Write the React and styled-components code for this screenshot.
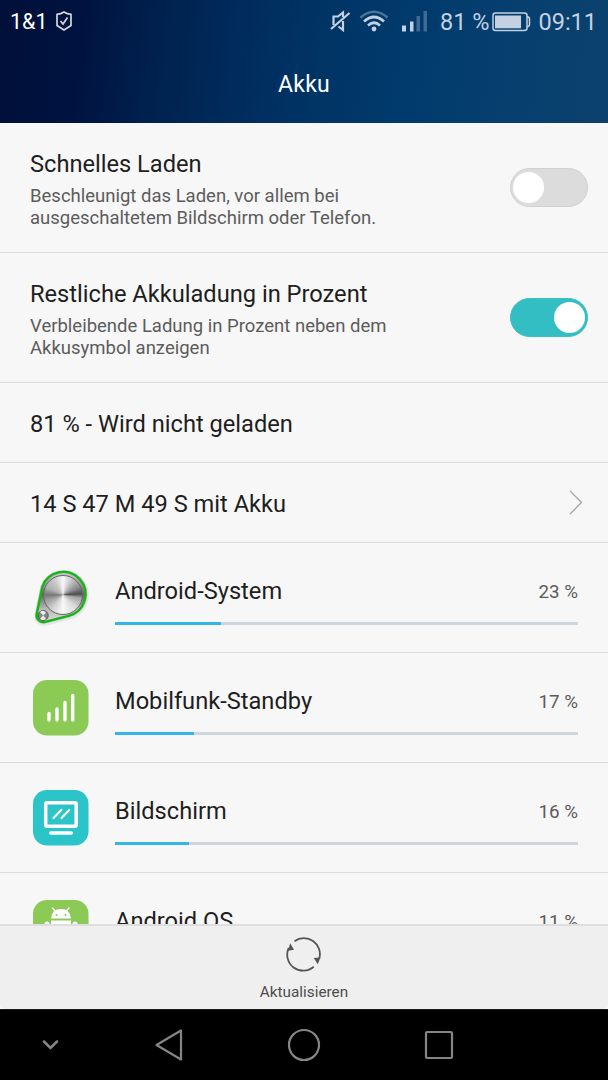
import styled, { createGlobalStyle } from "styled-components";

const GlobalStyle = createGlobalStyle`
	* {
		box-sizing: border-box;
		margin: 0;
		padding: 0;
	}

	body {
		background: #000;
		font-family: Roboto, sans-serif;
	}
`;

const Screen = styled.div`
	width: 608px;
	height: 1080px;
	display: flex;
	flex-direction: column;
	overflow: hidden;
	background: #f7f7f7;
`;

const Header = styled.header`
	flex: none;
	height: 123px;
	color: #fff;
	background: linear-gradient(97deg, #00103a 0%, #00123f 13%, #00224f 27%, #002c5d 40%, #003465 52%, #013b6d 68%, #07406f 85%, #0b416d 100%);
`;

const StatusBar = styled.div`
	height: 44px;
	padding: 0 11px 0 10px;
	display: flex;
	align-items: center;
	justify-content: space-between;
`;

const StatusGroup = styled.div`
	display: flex;
	align-items: center;
	color: #c3d1e0;
`;

const StatusText = styled.span`
	font-size: ${({ $size }) => $size || 23.5}px;
	line-height: 44px;
	margin-left: ${({ $left }) => $left || 0}px;
	color: ${({ $color }) => $color || "inherit"};
	white-space: nowrap;
`;

const Icon = styled.svg`
	display: block;
	flex: none;
	margin-left: ${({ $left }) => $left || 0}px;
`;

const Title = styled.h1`
	font-size: 23px;
	font-weight: 400;
	line-height: 81px;
	letter-spacing: 0.3px;
	text-align: center;
`;

const List = styled.main`
	height: 801px;
	flex: none;
	overflow: hidden;
`;

const Row = styled.div`
	height: ${({ $height }) => $height}px;
	padding: 0 20px 0 30px;
	display: flex;
	align-items: center;
	justify-content: space-between;
	border-bottom: 1px solid #dcdcdc;
`;

const RowText = styled.div`
	padding-top: ${({ $top }) => $top || 2}px;
`;

const RowTitle = styled.h2`
	font-size: 23.65px;
	font-weight: 400;
	line-height: 30px;
	color: #1e1e1e;
	white-space: nowrap;
`;

const Description = styled.p`
	margin-top: 6px;
	font-size: 18.5px;
	line-height: 22px;
	color: #5c5c5c;
	white-space: nowrap;
`;

const Toggle = styled.button`
	width: 78px;
	height: 39px;
	padding: 0 2px;
	display: flex;
	align-items: center;
	justify-content: ${({ $on }) => ($on ? "flex-end" : "flex-start")};
	border: 1px solid ${({ $on }) => ($on ? "#3ac0c5" : "#d0d0d0")};
	border-radius: 20px;
	background: ${({ $on }) => ($on ? "#33bec4" : "#dcdcdc")};
`;

const Knob = styled.span`
	width: 31px;
	height: 31px;
	border-radius: 50%;
	background: #fff;
`;

const AppRow = styled.div`
	height: 110px;
	padding: 0 30px;
	display: flex;
	border-bottom: 1px solid #dcdcdc;
`;

const AppIcon = styled.svg`
	flex: none;
	width: 60px;
	height: 60px;
	margin: 24px 25px 0 0;
`;

// Brushed metal face of the system icon
const MetalDisc = styled.div`
	width: 40px;
	height: 40px;
	border: 1px solid #666;
	border-radius: 50%;
	background: conic-gradient(#f8f8f8, #bdbdbd 35deg, #8a8a8a 65deg, #4c4c4c 86deg, #a5a5a5 100deg, #dadada 135deg, #f8f8f8 180deg, #cfcfcf 220deg, #999 255deg, #777 270deg, #b0b0b0 295deg, #cacaca 330deg, #f8f8f8);
`;

const AppBody = styled.div`
	flex: 1;
	padding-top: 33px;
`;

const AppLine = styled.div`
	height: 46px;
	display: flex;
	align-items: flex-start;
	justify-content: space-between;
`;

const Percent = styled.span`
	font-size: 18.8px;
	line-height: 32px;
	color: #5c5c5c;
`;

const Track = styled.div`
	height: 3px;
	background: #ccd6dc;
`;

const Fill = styled.div`
	height: 3px;
	background: #33b5e8;
`;

const Footer = styled.footer`
	flex: none;
	height: 85px;
	display: flex;
	flex-direction: column;
	align-items: center;
	padding-top: 10px;
	border-top: 2px solid #dedede;
	border-radius: 0 0 5px 5px;
	background: #efefef;
`;

const FooterLabel = styled.span`
	margin-top: 10px;
	font-size: 15.3px;
	line-height: 20px;
	color: #4c4c4c;
`;

const NavBar = styled.nav`
	flex: none;
	height: 71px;
	display: flex;
	align-items: center;
	border-top: 1px solid #1c1c1c;
	background: #000;
`;

const ShieldIcon = () => (
	<Icon $left={7} width="18" height="24" viewBox="0 0 18 24" fill="none" stroke="#d4d7d6" strokeWidth="1.7">
		<path d="M9 2 Q12 4 16 4.400 V15.500 Q13 17.500 9 20 Q5 17.500 2 15.500 V4.400 Q6 4 9 2 Z" />
		<path d="M5.500 11 L8 14 L12.500 7.500" />
	</Icon>
);

const MuteIcon = () => (
	<Icon width="22" height="24" viewBox="0 0 22 24" fill="none" stroke="#c3d1e0" strokeWidth="2.2">
		<path d="M4.500 15 V6.500 H9 L14 2.500 V7 M9.500 16.500 L14 20 V11 M2 19 L20.500 3" />
	</Icon>
);

const WifiIcon = () => (
	<Icon $left={8} width="30" height="24" viewBox="0 0 30 24" fill="none" strokeWidth="2.4">
		<path d="M1.500 7.500 Q15 -4 28.500 7.500" stroke="#4c749a" />
		<path d="M5 11.500 Q15 2.500 25 11.500 M9 15.500 Q15 10 21 15.500" stroke="#c3d1e0" strokeWidth="2.7" />
		<circle cx="15" cy="19" r="2.400" fill="#c3d1e0" />
	</Icon>
);

const SignalIcon = () => (
	<Icon $left={13} width="25" height="22" viewBox="0 0 25 22">
		<path d="M0 14.500h4v6H0z M8 10.500h3.500v10H8z" fill="#c3d1e0" />
		<path d="M14.500 5H18v15.500h-3.500z M21.500 0H25v20.500h-3.500z" fill="#3f6a93" />
	</Icon>
);

const BatteryIcon = () => (
	<Icon $left={3} width="39" height="20" viewBox="0 0 39 20">
		<rect x="1" y="1" width="34" height="17.500" rx="2.500" fill="none" stroke="#c3d1e0" strokeWidth="1.500" />
		<rect x="3" y="3.500" width="26" height="12.800" fill="#c3d1e0" />
		<path d="M35 4.500 Q37.500 5 37.500 7 V12.500 Q37.500 14.500 35 15" fill="none" stroke="#c3d1e0" strokeWidth="1.500" />
	</Icon>
);

const beltPath = "M12.300 20 A22.200 22.200 0 1 1 38.500 48.800 L15 54.800 A6.700 6.700 0 0 1 6.800 47 Z";

const SystemIcon = () => (
	<AppIcon viewBox="0 0 60 60">
		<defs>
			<linearGradient id="plate" x1="0" y1="0" x2="0" y2="1">
				<stop offset="0" stopColor="#ccc" />
				<stop offset="0.25" stopColor="#999" />
				<stop offset="0.45" stopColor="#666" />
				<stop offset="0.75" stopColor="#bbb" />
				<stop offset="1" stopColor="#ddd" />
			</linearGradient>
		</defs>
		<path d={beltPath} fill="none" stroke="#555" strokeOpacity="0.1" strokeWidth="6" transform="translate(0.500 1)" />
		<path d={beltPath} fill="none" stroke="#555" strokeOpacity="0.3" strokeWidth="3.500" />
		<path d={beltPath} fill="url(#plate)" stroke="#12b812" strokeWidth="2.300" />
		<foreignObject x="13" y="8" width="40" height="40">
			<MetalDisc />
		</foreignObject>
		<circle cx="13.200" cy="48.500" r="5" fill="#888" stroke="#555" />
		<path d="M13.200 48.500 L10 45 Q13 42.500 16 45.500 Z M13.200 48.500 L10 52 Q13 54 16 52 Z" fill="#eee" />
	</AppIcon>
);

const SignalAppIcon = () => (
	<AppIcon viewBox="0 0 60 60">
		<rect x="3" y="3" width="55.500" height="55.500" rx="14" fill="#8aca55" />
		<path d="M19 36.500V43 M27 32V43 M35 25.500V43 M42.700 18.500V43" stroke="#fff" strokeWidth="3.400" strokeLinecap="round" />
	</AppIcon>
);

const ScreenAppIcon = () => (
	<AppIcon viewBox="0 0 60 60">
		<rect x="3" y="3" width="55.500" height="55.500" rx="14" fill="#2bc4c9" />
		<rect x="15.700" y="15.700" width="30.500" height="23.500" rx="1.500" fill="none" stroke="#fff" strokeWidth="3.500" />
		<path d="M20.800 46H41.200" stroke="#fff" strokeWidth="3.600" strokeLinecap="round" />
		<path d="M23.500 31L31.300 23 M31.500 31L39.300 23" stroke="#fff" strokeWidth="2.200" strokeLinecap="round" />
	</AppIcon>
);

const AndroidAppIcon = () => (
	<AppIcon viewBox="0 0 60 60">
		<rect x="3" y="3" width="55.500" height="55.500" rx="14" fill="#8aca55" />
		<path d="M21 21.500 Q21.500 12 31 12 Q40 12 41 21.500 Z M21 23.500H41V43H21Z" fill="#fff" />
		<path d="M25.500 14.500L22.500 11 M36 14.500L39 11" stroke="#fff" strokeWidth="1.500" strokeLinecap="round" />
		<path d="M17 27V37 M45 27V37" stroke="#fff" strokeWidth="5" strokeLinecap="round" />
		<circle cx="26.500" cy="18" r="1" fill="#8aca55" />
		<circle cx="35.500" cy="18" r="1" fill="#8aca55" />
	</AppIcon>
);

// Consumers, sorted by their share of the battery
const apps = [
	{ name: "Android-System", percent: 23, icon: SystemIcon },
	{ name: "Mobilfunk-Standby", percent: 17, icon: SignalAppIcon },
	{ name: "Bildschirm", percent: 16, icon: ScreenAppIcon },
	{ name: "Android OS", percent: 11, icon: AndroidAppIcon },
];

export default function App() {
	return (
		<>
			<GlobalStyle />
			<Screen>
				<Header>
					<StatusBar>
						<StatusGroup>
							<StatusText $size={21.5} $color="#fff">1&amp;1</StatusText>
							<ShieldIcon />
						</StatusGroup>
						<StatusGroup>
							<MuteIcon />
							<WifiIcon />
							<SignalIcon />
							<StatusText $left={13}>81 %</StatusText>
							<BatteryIcon />
							<StatusText $left={7}>09:11</StatusText>
						</StatusGroup>
					</StatusBar>
					<Title>Akku</Title>
				</Header>

				<List>
					<Row $height={130}>
						<RowText $top={3}>
							<RowTitle>Schnelles Laden</RowTitle>
							<Description>
								Beschleunigt das Laden, vor allem bei
								<br />
								ausgeschaltetem Bildschirm oder Telefon.
							</Description>
						</RowText>
						<Toggle aria-label="Schnelles Laden">
							<Knob />
						</Toggle>
					</Row>
					<Row $height={130}>
						<RowText $top={3}>
							<RowTitle>Restliche Akkuladung in Prozent</RowTitle>
							<Description>
								Verbleibende Ladung in Prozent neben dem
								<br />
								Akkusymbol anzeigen
							</Description>
						</RowText>
						<Toggle $on aria-label="Restliche Akkuladung in Prozent">
							<Knob />
						</Toggle>
					</Row>
					<Row $height={80}>
						<RowText>
							<RowTitle>81 % - Wird nicht geladen</RowTitle>
						</RowText>
					</Row>
					<Row $height={80}>
						<RowText>
							<RowTitle>14 S 47 M 49 S mit Akku</RowTitle>
						</RowText>
						<Icon width="20" height="26" viewBox="0 0 20 26" fill="none" stroke="#a6a6a6" strokeWidth="1.3">
							<path d="M2 1 L13.500 12.500 L2 24" />
						</Icon>
					</Row>
					{apps.map(({ name, percent, icon: Glyph }) => (
						<AppRow key={name}>
							<Glyph />
							<AppBody>
								<AppLine>
									<RowTitle>{name}</RowTitle>
									<Percent>{percent} %</Percent>
								</AppLine>
								<Track>
									<Fill style={{ width: `${percent}%` }} />
								</Track>
							</AppBody>
						</AppRow>
					))}
				</List>

				<Footer>
					<Icon width="36" height="36" viewBox="0 0 36 36" fill="none" stroke="#555" strokeWidth="1.800">
						<path d="M8.500 5.200 A16 16 0 0 1 33.300 22.500 M27.700 30.800 A16 16 0 0 1 2.700 12" />
						<path d="M2 14.800 L4.200 7.200 L8 13.700 Z M27.700 22 L34.400 21.500 L31.800 28.200 Z" fill="#555" stroke="none" />
					</Icon>
					<FooterLabel>Aktualisieren</FooterLabel>
				</Footer>

				<NavBar>
					<Icon $left={42} width="17" height="12" viewBox="0 0 17 12" fill="none" stroke="#858585" strokeWidth="2.500" strokeLinecap="round">
						<path d="M2 2.500 L8.500 9 L15 2.500" />
					</Icon>
					<Icon $left={95} width="30" height="36" viewBox="0 0 30 36" fill="none" stroke="#858585" strokeWidth="2.200" strokeLinejoin="round">
						<path d="M2.500 18 L27 3.500 V32.500 Z" />
					</Icon>
					<Icon $left={103} width="34" height="34" viewBox="0 0 34 34" fill="none" stroke="#858585" strokeWidth="2.200">
						<circle cx="17" cy="17" r="15" />
					</Icon>
					<Icon $left={103} width="30" height="30" viewBox="0 0 30 30" fill="none" stroke="#858585" strokeWidth="2.200">
						<rect x="2" y="2" width="26" height="26" rx="1" />
					</Icon>
				</NavBar>
			</Screen>
		</>
	);
}
